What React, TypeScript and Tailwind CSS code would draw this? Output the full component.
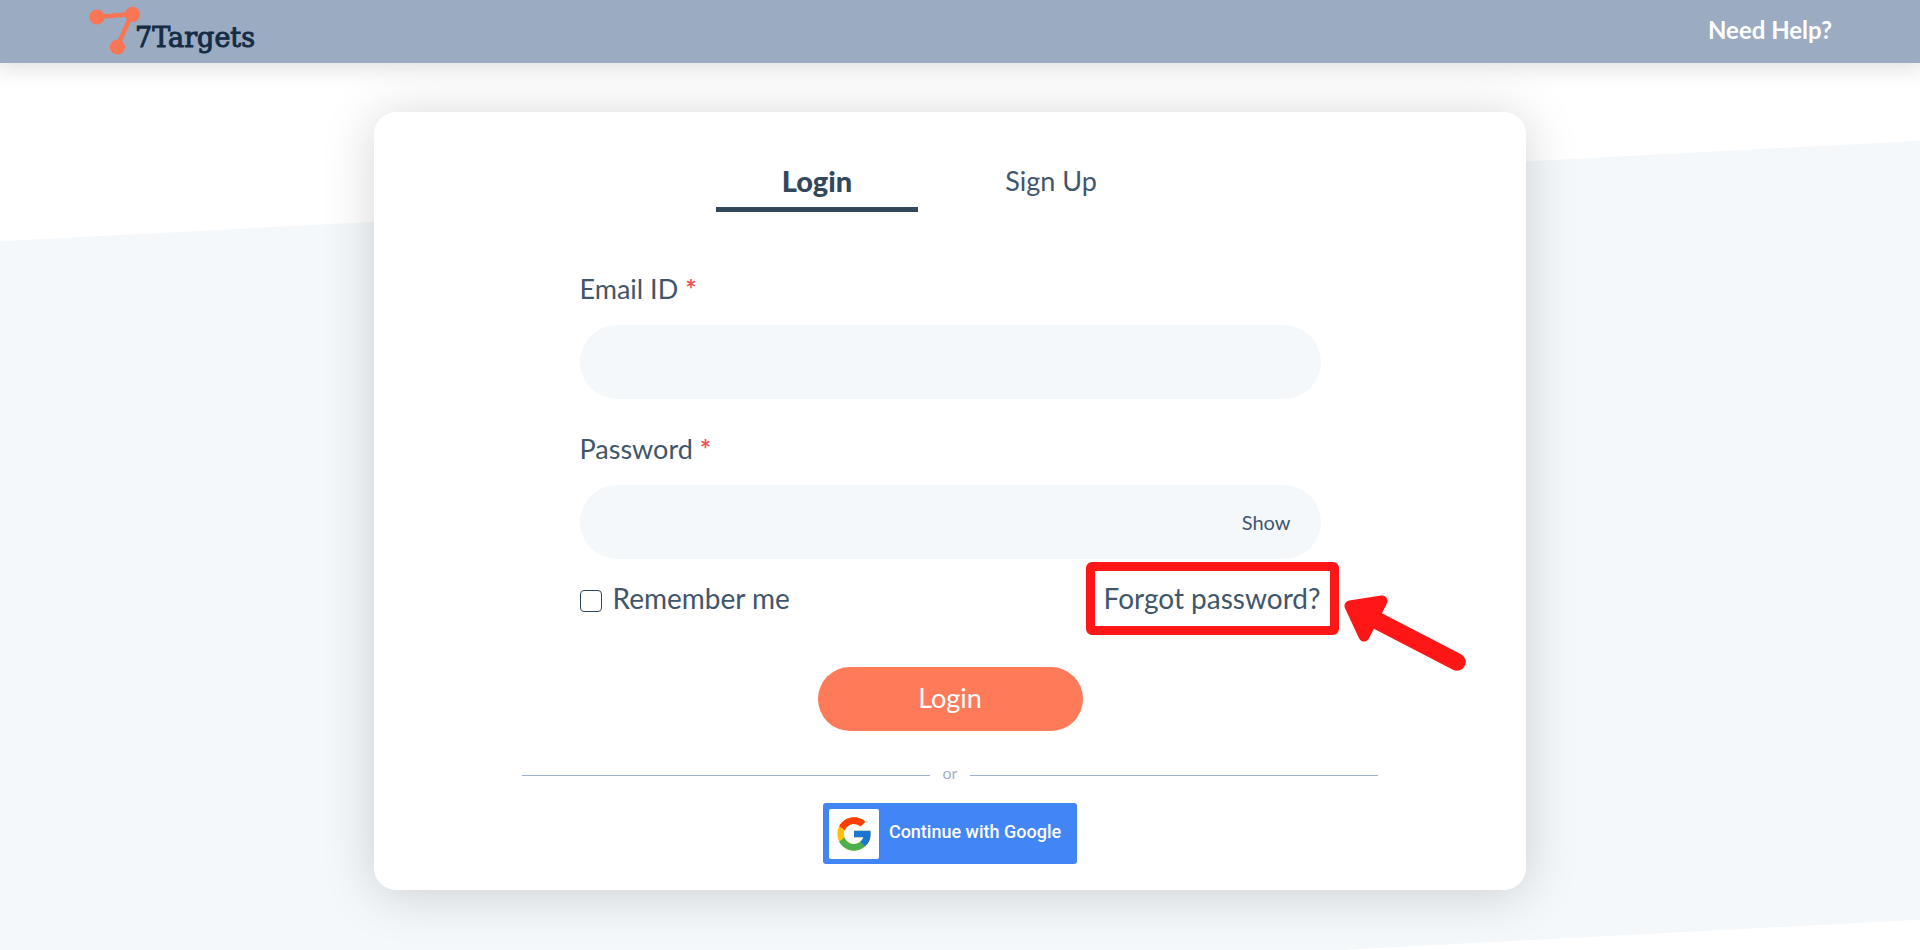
import { useState } from "react";
import type { InputHTMLAttributes, ReactNode } from "react";

function Logo() {
  return (
    <a href="#" aria-label="7Targets home" className="flex items-start pt-1">
      <svg viewBox="0 0 54 52" className="h-[52px] w-[54px]" aria-hidden="true">
        <path d="M8 13 43 10 28 43" fill="none" stroke="#f97553" strokeWidth="4.4" />
        <circle cx="8" cy="13" r="7.6" fill="#f97553" />
        <circle cx="43.5" cy="10.3" r="7.6" fill="#f97553" />
        <circle cx="28.5" cy="43" r="7.6" fill="#f97553" />
      </svg>
      <span className="-ml-2 pt-[18px] font-['DejaVu_Serif',serif] text-[27px] leading-8 text-[#152c45] [-webkit-text-stroke:1px_#152c45]">
        7Targets
      </span>
    </a>
  );
}

function GoogleMark() {
  return (
    <svg viewBox="0 0 48 48" className="size-10" aria-hidden="true">
      <path fill="#FFC107" d="M43.611 20.083H42V20H24v8h11.303c-1.649 4.657-6.08 8-11.303 8-6.627 0-12-5.373-12-12s5.373-12 12-12c3.059 0 5.842 1.154 7.961 3.039l5.657-5.657C34.046 6.053 29.268 4 24 4 12.955 4 4 12.955 4 24s8.955 20 20 20 20-8.955 20-20c0-1.341-.138-2.65-.389-3.917z" />
      <path fill="#FF3D00" d="m6.306 14.691 6.571 4.819C14.655 15.108 18.961 12 24 12c3.059 0 5.842 1.154 7.961 3.039l5.657-5.657C34.046 6.053 29.268 4 24 4 16.318 4 9.656 8.337 6.306 14.691z" />
      <path fill="#4CAF50" d="M24 44c5.166 0 9.86-1.977 13.409-5.192l-6.19-5.238A11.91 11.91 0 0 1 24 36c-5.202 0-9.619-3.317-11.283-7.946l-6.522 5.025C9.505 39.556 16.227 44 24 44z" />
      <path fill="#1976D2" d="M43.611 20.083H42V20H24v8h11.303a12.04 12.04 0 0 1-4.087 5.571l6.19 5.238C36.971 39.205 44 34 44 24c0-1.341-.138-2.65-.389-3.917z" />
    </svg>
  );
}

type FieldProps = InputHTMLAttributes<HTMLInputElement> & {
  id: string;
  label: string;
  children?: ReactNode;
};

function Field({ id, label, children, ...input }: FieldProps) {
  return (
    <div>
      <label htmlFor={id} className="block text-[27px] leading-8">
        {label} <span className="font-bold text-[#f2545b]">*</span>
      </label>
      <div className="mt-5 flex h-[74px] items-center rounded-full bg-[#f4f8fb] px-[30px]">
        <input id={id} className="h-full min-w-0 flex-1 bg-transparent text-2xl outline-none" {...input} />
        {children}
      </div>
    </div>
  );
}

export default function App() {
  const [visible, setVisible] = useState(false);

  return (
    <div className="flex min-h-screen flex-col bg-white font-[Lato,sans-serif] text-[#42566b]">
      <header className="relative z-10 flex h-[63px] items-start justify-between bg-[#9aabc2] pl-[89px] pr-[88px] shadow-[0_0_24px_4px_rgba(0,0,0,0.14)]">
        <Logo />
        <a href="#help" className="pt-[14px] text-2xl font-bold leading-8 text-white">
          Need Help?
        </a>
      </header>

      <main className="relative isolate flex-1 overflow-hidden pb-[60px] pr-5 pt-[49px]">
        <div className="absolute inset-x-0 -bottom-5 top-32 -z-10 -skew-y-3 bg-[#f4f8fb]" />

        <section className="mx-auto w-full max-w-[1152px] rounded-[22px] bg-white px-[52px] pb-[26px] pt-[51px] shadow-[0_4px_52px_rgba(0,0,0,0.17)]">
          <div role="tablist" className="flex justify-center text-[27px] leading-9">
            <button role="tab" aria-selected="true" className="mr-8 w-[202px] border-b-[5px] border-[#33475b] pb-2 text-[29px] font-black text-[#33475b]">
              Login
            </button>
            <button role="tab" aria-selected="false" className="mr-8 w-[202px] border-b-[5px] border-transparent pb-2">
              Sign Up
            </button>
          </div>

          <form className="mx-auto mt-[61px] max-w-[741px]" onSubmit={(e) => e.preventDefault()}>
            <div className="flex flex-col gap-[34px]">
              <Field id="email" label="Email ID" type="email" />
              <Field id="password" label="Password" type={visible ? "text" : "password"}>
                <button type="button" onClick={() => setVisible(!visible)} className="text-xl">
                  {visible ? "Hide" : "Show"}
                </button>
              </Field>
            </div>

            <div className="mt-[21px] flex items-center justify-between text-[28px] leading-9">
              <label className="flex items-center gap-[11px]">
                <input type="checkbox" className="mt-1.5 size-[22px] appearance-none rounded border-[1.5px] border-[#33475b] bg-white checked:bg-[#33475b]" />
                Remember me
              </label>
              <a href="#forgot" className="relative">
                Forgot password?
                <span className="absolute -bottom-[19px] -left-[18px] -right-[18px] -top-[18px] rounded-md border-[9px] border-[#ff1616]" />
                <svg viewBox="0 0 122 78" className="absolute -right-[145px] top-[15px] h-[78px] w-[122px]" aria-hidden="true">
                  <path d="M32 25 113 67" stroke="#ff1616" strokeWidth="17.5" strokeLinecap="round" />
                  <path d="M6 11 38 6 20 41Z" fill="#ff1616" stroke="#ff1616" strokeWidth="11" strokeLinejoin="round" />
                </svg>
              </a>
            </div>

            <button type="submit" className="mx-auto mt-[51px] block h-16 w-[265px] rounded-full bg-[#ff7a59] pb-0.5 text-[27px] text-white">
              Login
            </button>
          </form>

          <div className="mx-auto mt-8 flex max-w-[856px] items-center text-[#9fb1c9]">
            <span className="h-px flex-1 bg-current" />
            <span className="w-10 pb-1 text-center text-base leading-5">or</span>
            <span className="h-px flex-1 bg-current" />
          </div>

          <button type="button" className="mx-auto mt-4 flex h-[61px] w-[254px] items-center rounded-[3px] bg-[#4285f4] px-[6px] font-[Roboto,sans-serif] text-lg font-medium text-white">
            <span className="grid size-[50px] place-items-center rounded-[2px] bg-white">
              <GoogleMark />
            </span>
            <span className="flex-1 pb-1 text-center">Continue with Google</span>
          </button>
        </section>
      </main>
    </div>
  );
}
